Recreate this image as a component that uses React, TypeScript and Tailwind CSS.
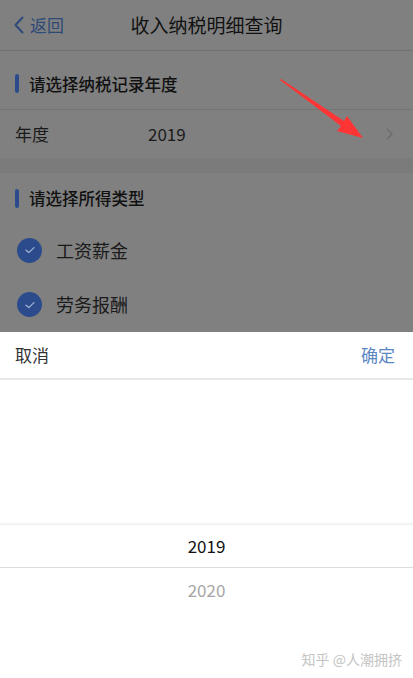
import React from "react";

const font = { fontFamily: '"Noto Sans CJK SC", "Noto Sans", sans-serif' };

function Check() {
  return (
    <div className="w-[25px] h-[25px] rounded-full bg-[#2b4b8c] flex items-center justify-center">
      <svg width="12" height="10" viewBox="0 0 12 10">
        <path d="M2 5.2 L4.8 7.6 L10 2.6" fill="none" stroke="#9fb1d4" strokeWidth="1.3" strokeLinecap="round" strokeLinejoin="round" />
      </svg>
    </div>
  );
}

export default function App() {
  return (
    <div className="relative w-[413px] h-[678px] overflow-hidden flex flex-col bg-[#808080]" style={font}>
      {/* nav */}
      <div className="relative h-[51px] flex items-center border-b border-[#717171] shrink-0">
        <div className="flex items-center pl-[14px] gap-[6px] text-[#2e4a78] text-[17px]">
          <svg width="10" height="18" viewBox="0 0 10 18">
            <path d="M8.5 1.5 L1.5 9 L8.5 16.5" fill="none" stroke="#2e4a78" strokeWidth="2" strokeLinecap="round" strokeLinejoin="round" />
          </svg>
          <span>返回</span>
        </div>
        <div className="absolute inset-0 flex items-center justify-center text-[19px] text-[#111111] pointer-events-none">收入纳税明细查询</div>
      </div>

      {/* section 1 */}
      <div className="h-[59px] flex items-end pb-[16px] pl-[15px] gap-[10px] border-b border-[#747474] shrink-0">
        <div className="w-[4px] h-[19px] rounded-full bg-[#2b4b8c]" />
        <span className="text-[16.5px] font-medium text-[#111111] leading-[18px]">请选择纳税记录年度</span>
      </div>
      <div className="h-[48px] flex items-center pl-[15px] pr-[20px] shrink-0">
        <span className="text-[17px] text-[#1a1a1a] w-[133px]">年度</span>
        <span className="text-[17px] text-[#1a1a1a] flex-1">2019</span>
        <svg width="7" height="12" viewBox="0 0 7 12">
          <path d="M1 1 L6 6 L1 11" fill="none" stroke="#6a6a6a" strokeWidth="1.3" />
        </svg>
      </div>
      <div className="h-[15px] bg-[#7b7b7b] shrink-0" />

      {/* section 2 */}
      <div className="h-[50px] flex items-center pl-[15px] gap-[10px] shrink-0">
        <div className="w-[4px] h-[19px] rounded-full bg-[#2b4b8c]" />
        <span className="text-[16.5px] font-medium text-[#111111]">请选择所得类型</span>
      </div>
      <div className="h-[54px] flex items-center pl-[17px] gap-[14px] shrink-0">
        <Check />
        <span className="text-[18px] text-[#1a1a1a]">工资薪金</span>
      </div>
      <div className="h-[55px] flex items-center pl-[17px] gap-[14px] shrink-0">
        <Check />
        <span className="text-[18px] text-[#1a1a1a]">劳务报酬</span>
      </div>

      {/* bottom sheet */}
      <div className="flex-1 bg-white flex flex-col">
        <div className="h-[48px] flex items-center justify-between pl-[15px] pr-[18px] border-b-2 border-[#e8e8e8] shrink-0">
          <span className="text-[17px] text-[#333333]">取消</span>
          <span className="text-[17px] text-[#5a86c2]">确定</span>
        </div>
        <div className="h-[142px] shrink-0" />
        <div className="h-[3px] bg-gradient-to-b from-white to-[#ededed] shrink-0" />
        <div className="h-[43px] flex items-center justify-center text-[17px] text-[#111111] border-b border-[#dcdcdc] shrink-0">2019</div>
        <div className="h-[44px] flex items-center justify-center text-[17px] text-[#a6a6a6] shrink-0">2020</div>
      </div>

      {/* red annotation arrow */}
      <svg className="absolute left-0 top-0 pointer-events-none" width="413" height="678" viewBox="0 0 413 678">
        <polygon points="280,80 281,79 344,121 347,116 363,138 337,131 341,126" fill="#ff3535" />
      </svg>

      {/* watermark */}
      <div className="absolute right-[11px] top-[649px] text-[14px] text-[#c4c4c4] leading-[20px]">知乎 @人潮拥挤</div>
    </div>
  );
}
